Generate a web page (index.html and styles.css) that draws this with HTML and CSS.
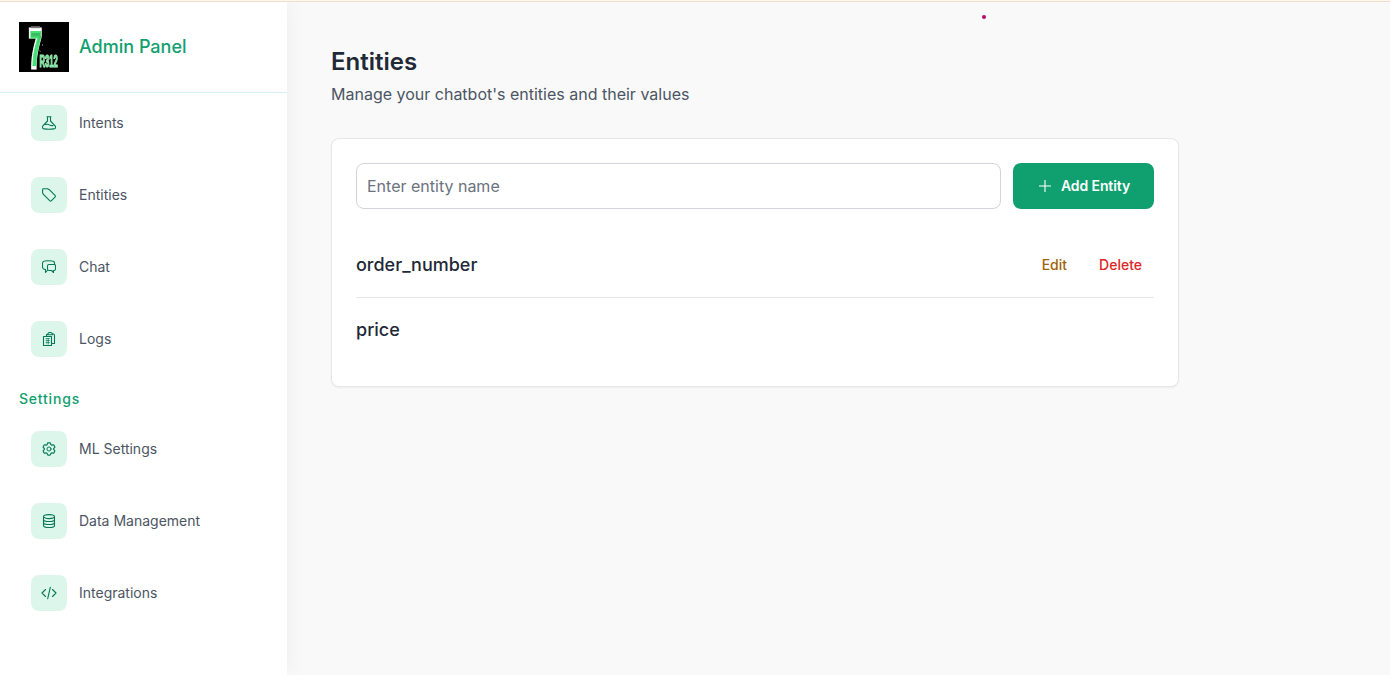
FILE: index.html
```html
<!DOCTYPE html>
<html lang="en">
<head>
<meta charset="utf-8">
<title>Admin Panel</title>
<link rel="stylesheet" href="styles.css">
</head>
<body>
<div class="app">
  <aside class="sidebar">
    <header class="brand">
      <svg class="logo" viewBox="0 0 50 50" aria-hidden="true">
        <defs>
          <filter id="soft"><feGaussianBlur stdDeviation=".5"/></filter>
          <linearGradient id="seven" x1="0" y1="0" x2="0" y2="1"><stop offset="0" stop-color="#2a9048"/><stop offset=".45" stop-color="#46e075"/><stop offset="1" stop-color="#46e075"/></linearGradient>
        </defs>
        <rect width="50" height="50"/>
        <g filter="url(#soft)" class="logo-text">
          <text class="seven-edge" transform="translate(10 44.500) scale(.430 1)">7</text>
          <text class="seven-fill" transform="translate(11 43) scale(.430 1)">7</text>
          <path d="M12 5.200H21" stroke="#777" stroke-width="2"/>
          <path d="M22 14v2M23.500 22v2M20.500 28l1 2" stroke="#777" stroke-width=".8"/>
          <text class="name-edge" transform="translate(20.500 45) scale(.450 1)">R312</text>
        </g>
      </svg>
      <span class="brand-name">Admin Panel</span>
    </header>
    <nav class="nav">
      <a class="nav-item"><span class="tile"><svg class="icon" viewBox="0 0 14 14"><path d="M5 .7h4M5.500 1v4L.9 9.900C-.1 11.500.6 12.700 2.100 12.900Q7 13.600 11.900 12.900C13.400 12.700 14.100 11.500 13.100 9.900L8.500 5V1M3.200 8.600Q5.500 7.800 7.300 8.900T11 9.500"/></svg></span>Intents</a>
      <a class="nav-item"><span class="tile"><svg class="icon" viewBox="0 0 14 14"><path d="M1.500.8H5.500L7.300 1.700 13 7.400Q13.800 8.200 13 9.100L9.500 12.700Q8.600 13.500 7.700 12.700L1.400 6.400.6 4.700V1.700Q.6.8 1.500.8Z"/></svg></span>Entities</a>
      <a class="nav-item"><span class="tile"><svg class="icon" viewBox="0 0 14 14"><path d="M12.500 4.300V3.200Q12.500 1.200 10.300 1Q6.200.5 2.700 1Q.5 1.200.5 3.300V7.300Q.5 9.300 3.500 9.600V12.500L5.300 10.500M6.900 4.500H12.300Q13.500 4.500 13.500 5.900V9Q13.500 10.400 12.200 10.500H11.500V12.500L9.500 10.500H6.900Q5.500 10.400 5.500 9V5.900Q5.500 4.500 6.900 4.500Z"/></svg></span>Chat</a>
      <a class="nav-item"><span class="tile"><svg class="icon" viewBox="0 0 14 14"><path d="M1.500 4.500H9.500V13.500H1.500ZM4.500 4.200V2.500H5.500M5.800 2.800V1.900Q6.200.5 8 .5T10.500 1.900V2.800ZM10.500 1.700Q12.500 1.700 12.500 3.500V11.500H9.500"/><path class="lines" d="M4 6.500H7.500M4 8.500H7.500M4 10.500H7.500"/><path class="lines" d="M5 6.500V12M6.500 6.500V12"/></svg></span>Logs</a>
      <h2 class="nav-heading">Settings</h2>
      <a class="nav-item"><span class="tile"><svg class="icon" viewBox="0 0 24 24"><g class="fine"><path d="M9.594 3.940c.09-.542.560-.940 1.110-.940h2.593c.55 0 1.020.398 1.110.940l.213 1.281c.063.374.313.686.645.870.074.040.147.083.220.127.325.196.720.257 1.075.124l1.217-.456a1.125 1.125 0 0 1 1.370.490l1.296 2.247a1.125 1.125 0 0 1-.260 1.431l-1.003.827c-.293.241-.438.613-.430.992a7.723 7.723 0 0 1 0 .255c-.008.378.137.750.430.991l1.004.827c.424.350.534.955.260 1.430l-1.298 2.247a1.125 1.125 0 0 1-1.369.491l-1.217-.456c-.355-.133-.750-.072-1.076.124a6.470 6.470 0 0 1-.220.128c-.331.183-.581.495-.644.869l-.213 1.281c-.090.543-.560.940-1.110.940h-2.594c-.550 0-1.019-.398-1.110-.940l-.213-1.281c-.062-.374-.312-.686-.644-.870a6.520 6.520 0 0 1-.220-.127c-.325-.196-.720-.257-1.076-.124l-1.217.456a1.125 1.125 0 0 1-1.369-.490l-1.297-2.247a1.125 1.125 0 0 1 .260-1.431l1.004-.827c.292-.240.437-.613.430-.991a6.932 6.932 0 0 1 0-.255c.007-.380-.138-.751-.430-.992l-1.004-.827a1.125 1.125 0 0 1-.260-1.430l1.297-2.247a1.125 1.125 0 0 1 1.370-.491l1.216.456c.356.133.751.072 1.076-.124.072-.044.146-.086.220-.128.332-.183.582-.495.644-.869l.214-1.280Z" transform="translate(12 12) scale(1.170) translate(-12 -12)"/><circle cx="12" cy="12" r="3.500"/></g></svg></span>ML Settings</a>
      <a class="nav-item"><span class="tile"><svg class="icon" viewBox="0 0 14 14"><ellipse cx="7" cy="2.600" rx="5.500" ry="2"/><path d="M1.500 2.600V11.400C1.500 14.100 12.500 14.100 12.500 11.400V2.600M1.500 5.500C1.500 8.200 12.500 8.200 12.500 5.500M1.500 8.500C1.500 11.200 12.500 11.200 12.500 8.500"/></svg></span>Data Management</a>
      <a class="nav-item"><span class="tile"><svg class="icon icon-code" viewBox="0 0 16 14"><path d="M4.500 3.500 1 7l3.500 3.500M11.500 3.500 15 7l-3.500 3.500M9.300 1.400 6.700 12.600"/></svg></span>Integrations</a>
    </nav>
  </aside>
  <main class="main">
    <h1 class="title">Entities</h1>
    <p class="subtitle">Manage your chatbot's entities and their values</p>
    <section class="card">
      <form class="add-form">
        <input class="field" type="text" placeholder="Enter entity name">
        <button class="add-button" type="button"><svg class="plus" viewBox="0 0 14 14"><path d="M7 1v12M1 7h12"/></svg>Add Entity</button>
      </form>
      <div class="entity">
        <span class="entity-name">order_number</span>
        <span class="actions"><a class="edit">Edit</a><a class="delete">Delete</a></span>
      </div>
      <div class="entity"><span class="entity-name">price</span></div>
    </section>
  </main>
  <span class="marker"></span>
</div>
</body>
</html>
```
FILE: styles.css
```css
* { box-sizing: border-box; }
body { margin: 0; font-family: Inter, sans-serif; background: #f9f9f9; color: #1f2937; }
.app { display: flex; position: relative; height: 675px; border-top: 1px solid #fff8e8; overflow: hidden; }
.app::before { content: ""; position: absolute; z-index: 2; inset: 0 0 auto; height: 1px; background: #eee0cf; }
.sidebar { width: 287px; flex: none; background: #fff; box-shadow: 0 0 22px rgba(0, 0, 0, .05); }
.brand { display: flex; align-items: center; gap: 10px; height: 92px; padding: 1px 19px 0; border-bottom: 1px solid #d7f1f2; }
.logo { width: 50px; height: 50px; overflow: visible; }
.logo-text { font-family: "Liberation Sans", sans-serif; font-weight: 700; }
.seven-edge { font-size: 53px; fill: #fff; stroke: #fff; stroke-width: 5; }
.seven-fill { font-size: 49px; fill: url(#seven); stroke: #46e075; stroke-width: 2; }
.name-edge { font-size: 17px; fill: #4fd67b; stroke: #a6efbd; stroke-width: 1.2; }
.brand-name { font-size: 18px; font-weight: 500; line-height: 28px; color: #10a06f; }
.nav { display: flex; flex-direction: column; }
.nav-item { display: flex; align-items: center; gap: 12px; height: 60px; margin-bottom: 12px; padding-left: 31px; font-size: 14px; line-height: 20px; color: #4b5563; }
.tile { display: flex; align-items: center; justify-content: center; width: 36px; height: 36px; border-radius: 8px; background: #ddf6eb; }
.icon { width: 14px; height: 14px; fill: none; stroke: #047857; stroke-width: 1.1; stroke-linecap: round; stroke-linejoin: round; }
.icon-code { width: 16px; }
.fine { stroke-width: 1.7; }
.lines { stroke-width: .6; }
.nav-heading { margin: 8px 0 10px; padding-left: 19px; font-size: 14px; line-height: 20px; font-weight: 500; letter-spacing: .8px; color: #10a06f; }
.main { width: 892px; padding: 45px 0 0 44px; }
.title { margin: 0; font-size: 24px; line-height: 32px; font-weight: 600; }
.subtitle { margin: 4px 0 32px; font-size: 16px; line-height: 24px; color: #4b5563; }
.card { height: 249px; padding: 24px; border: 1px solid #e5e7eb; border-radius: 8px; background: #fff; box-shadow: 0 1px 2px rgba(0, 0, 0, .05); }
.add-form { display: flex; gap: 12px; margin-bottom: 23px; }
.field { flex: 1; min-width: 0; height: 46px; padding: 0 10px; border: 1px solid #d1d5db; border-radius: 8px; background: #fff; font: 16px/24px Inter, sans-serif; }
.field::placeholder { color: #6b7280; opacity: 1; }
.add-button { display: flex; align-items: center; justify-content: center; gap: 9px; width: 141px; height: 46px; padding: 0 0 0 1px; border: 0; border-radius: 8px; background: #10a06f; color: #fff; font: 600 14px/20px Inter, sans-serif; letter-spacing: -.1px; }
.plus { width: 14px; height: 14px; fill: none; stroke: currentColor; stroke-width: 1.1; }
.entity { display: flex; align-items: center; justify-content: space-between; height: 65px; }
.entity + .entity { border-top: 1px solid #e5e7eb; }
.entity-name { font-size: 18px; line-height: 28px; font-weight: 500; }
.actions { display: flex; gap: 32px; padding-right: 12px; font-size: 14px; line-height: 20px; font-weight: 500; }
.edit { color: #a16207; }
.delete { color: #dc2626; }
.marker { position: absolute; left: 982px; top: 14px; width: 4px; height: 4px; border-radius: 50%; background: #be0b66; }
```
